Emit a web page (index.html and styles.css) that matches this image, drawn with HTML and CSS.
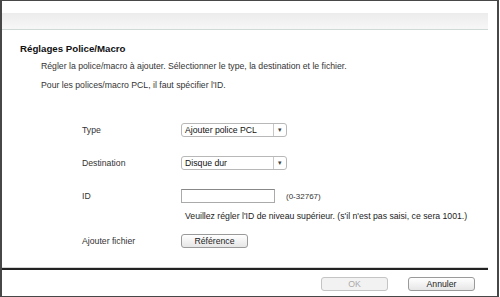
FILE: index.html
```html
<!DOCTYPE html>
<html lang="fr">
<head>
    <meta charset="UTF-8">
    <title>Réglages Police/Macro</title>
    <link rel="stylesheet" href="styles.css">
</head>
<body>

<div class="frame">

    <!-- Top band -->
    <div class="top-band"></div>

    <h2 class="title">Réglages Police/Macro</h2>

    <p class="intro">Régler la police/macro à ajouter. Sélectionner le type, la destination et le fichier.</p>
    <p class="intro second">Pour les polices/macro PCL, il faut spécifier l'ID.</p>

    <!-- Settings form -->
    <div class="form">
        <div class="row row-type">
            <span class="label">Type</span>
            <div class="select">
                <span class="select-text">Ajouter police PCL</span>
                <span class="select-arrow">&#9662;</span>
            </div>
        </div>

        <div class="row row-dest">
            <span class="label">Destination</span>
            <div class="select">
                <span class="select-text">Disque dur</span>
                <span class="select-arrow">&#9662;</span>
            </div>
        </div>

        <div class="row row-id">
            <span class="label">ID</span>
            <div class="field">
                <div class="id-line">
                    <input type="text" class="id-input">
                    <span class="range">(0-32767)</span>
                </div>
                <p class="hint">Veuillez régler l'ID de niveau supérieur. (s'il n'est pas saisi, ce sera 1001.)</p>
            </div>
        </div>

        <div class="row row-file">
            <span class="label">Ajouter fichier</span>
            <button class="btn">Référence</button>
        </div>
    </div>

    <!-- Footer -->
    <div class="footer">
        <button class="btn footer-btn" disabled>OK</button>
        <button class="btn footer-btn">Annuler</button>
    </div>

</div>

</body>
</html>
```

FILE: styles.css
```css
/* General Styling */
body {
    margin: 0;
    padding: 0;
    background-color: #ffffff;
    font-family: "Liberation Sans", Arial, sans-serif;
    font-size: 8.7px;
    color: #222;
}

.frame {
    width: 499px;
    height: 297px;
    border-left: 2px solid #474747;
    border-top: 1px solid #474747;
    border-right: 2px solid #474747;
    border-bottom: 1px solid #474747;
    box-sizing: border-box;
    display: flex;
    flex-direction: column;
}

.top-band {
    margin-top: 12px;
    margin-right: 9px;
    height: 16px;
    background: linear-gradient(#ececec, #f7f7f7);
    border-bottom: 1px solid #cfdad7;
}

.title {
    margin: 13px 0 0 18px;
    font-size: 9.7px;
    font-weight: bold;
    color: #111;
}

.intro {
    margin: 7px 0 0 39px;
    color: #333;
}

.intro.second {
    margin-top: 9px;
}

/* Form */
.form {
    margin: 33px 0 0 80px;
    display: flex;
    flex-direction: column;
}

.row {
    display: flex;
    align-items: center;
}

.row-dest {
    margin-top: 19px;
}

.row-id {
    margin-top: 19px;
    align-items: flex-start;
}

.row-file {
    margin-top: 13px;
}

.label {
    width: 99px;
    color: #333;
}

.row-id .label {
    padding-top: 2px;
}

.select {
    width: 106px;
    height: 14px;
    border: 1px solid #b8b8b8;
    border-radius: 3px;
    box-sizing: border-box;
    display: flex;
    align-items: center;
    background: #fff;
}

.select-text {
    flex: 1;
    padding-left: 3px;
    color: #111;
}

.select-arrow {
    width: 12px;
    height: 12px;
    border-left: 1px solid #c8c8c8;
    font-size: 7px;
    line-height: 12px;
    text-align: center;
    color: #444;
}

.id-line {
    display: flex;
    align-items: center;
    gap: 11px;
}

.id-input {
    width: 94px;
    height: 14px;
    margin: 0;
    padding: 0;
    border: 1px solid #aaa;
    border-top-color: #888;
    box-sizing: border-box;
}

.range {
    font-size: 8px;
    color: #333;
}

.hint {
    margin: 8px 0 0 4px;
    color: #222;
}

.btn {
    width: 67px;
    height: 14px;
    padding: 0;
    border: 1px solid #9a9a9a;
    border-radius: 3px;
    background: linear-gradient(#ffffff, #e6e6e6);
    font-family: "Liberation Sans", Arial, sans-serif;
    font-size: 8.7px;
    color: #222;
}

.btn:disabled {
    color: #aaa;
    border-color: #c4c4c4;
    background: #f2f2f2;
}

/* Footer */
.footer {
    margin: auto 9px 0 0;
    border-top: 1px solid #d4d4d4;
    box-shadow: inset 0 1px 0 #222, inset 0 2px 0 #222;
    padding: 9px 13px 5px 0;
    display: flex;
    justify-content: flex-end;
    gap: 20px;
}
```
